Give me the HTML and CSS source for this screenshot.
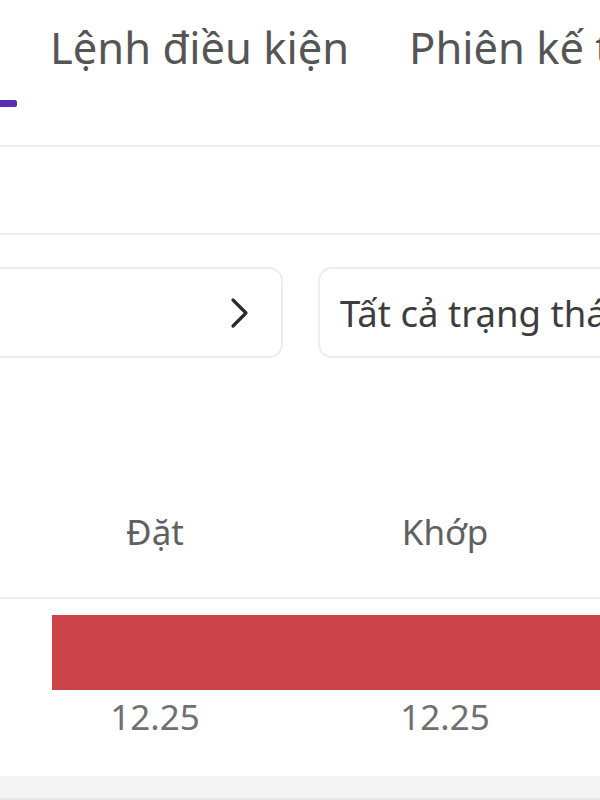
FILE: index.html
```html
<!DOCTYPE html>
<html lang="vi">
<head>
<meta charset="utf-8">
<link rel="stylesheet" href="styles.css">
</head>
<body>
<div class="page">
  <nav class="tabs">
    <div class="tab tab-active"><span class="indicator"></span></div>
    <div class="tab">Lệnh điều kiện</div>
    <div class="tab">Phiên kế tiếp</div>
  </nav>
  <div class="band"></div>
  <div class="filters">
    <div class="box box-date">
      <svg class="chev" width="22" height="34" viewBox="0 0 22 34"><path d="M4 4 L17 17 L4 30" fill="none" stroke="#2b2b2b" stroke-width="3.2" stroke-linecap="round" stroke-linejoin="round"/></svg>
    </div>
    <div class="box box-status">Tất cả trạng thái</div>
  </div>
  <div class="thead">
    <div class="col">Đặt</div>
    <div class="col">Khớp</div>
  </div>
  <div class="bar"></div>
  <div class="trow">
    <div class="col">12.25</div>
    <div class="col">12.25</div>
  </div>
  <div class="foot"></div>
</div>
</body>
</html>
```

FILE: styles.css
```css
html, body {
  margin: 0;
  padding: 0;
  background: #ffffff;
}
.page {
  width: 600px;
  height: 800px;
  overflow: hidden;
  font-family: "Noto Sans", "Open Sans", sans-serif;
  white-space: nowrap;
}
.tabs {
  display: flex;
  height: 145px;
  border-bottom: 2px solid #ececec;
}
.tab {
  font-size: 43.5px;
  line-height: 50px;
  color: #555555;
  padding-top: 22px;
}
.tab + .tab {
  margin-left: 60px;
}
.tab-active {
  width: 17px;
  padding-top: 100px;
}
.tab-active + .tab {
  margin-left: 33px;
}
.indicator {
  display: block;
  width: 17px;
  height: 7px;
  background: #5a2db5;
  border-radius: 0 2px 2px 0;
}
.band {
  height: 86px;
  border-bottom: 2px solid #eeeeee;
}
.filters {
  display: flex;
  gap: 35px;
  margin-top: 32px;
  margin-left: -20px;
}
.box {
  height: 87px;
  border: 2px solid #ededed;
  border-radius: 14px;
  display: flex;
  align-items: center;
  flex-shrink: 0;
}
.box-date {
  width: 299px;
  justify-content: flex-end;
}
.chev {
  margin-right: 30px;
}
.box-status {
  width: 400px;
  padding-left: 20px;
  font-size: 36.5px;
  color: #3d3d3d;
}
.thead, .trow {
  display: flex;
  padding-left: 10px;
}
.thead {
  height: 85px;
  padding-top: 154px;
  border-bottom: 2px solid #eeeeee;
}
.col {
  width: 290px;
  text-align: center;
  font-size: 35px;
  line-height: 40px;
}
.thead .col {
  color: #606060;
}
.bar {
  margin-top: 16px;
  margin-left: 52px;
  height: 75px;
  background: #cd434a;
}
.trow {
  margin-top: 7px;
}
.trow .col {
  color: #707070;
}
.foot {
  margin-top: 39px;
  height: 22px;
  background: #f4f4f4;
  border-bottom: 2px solid #e8e8e8;
}
```
